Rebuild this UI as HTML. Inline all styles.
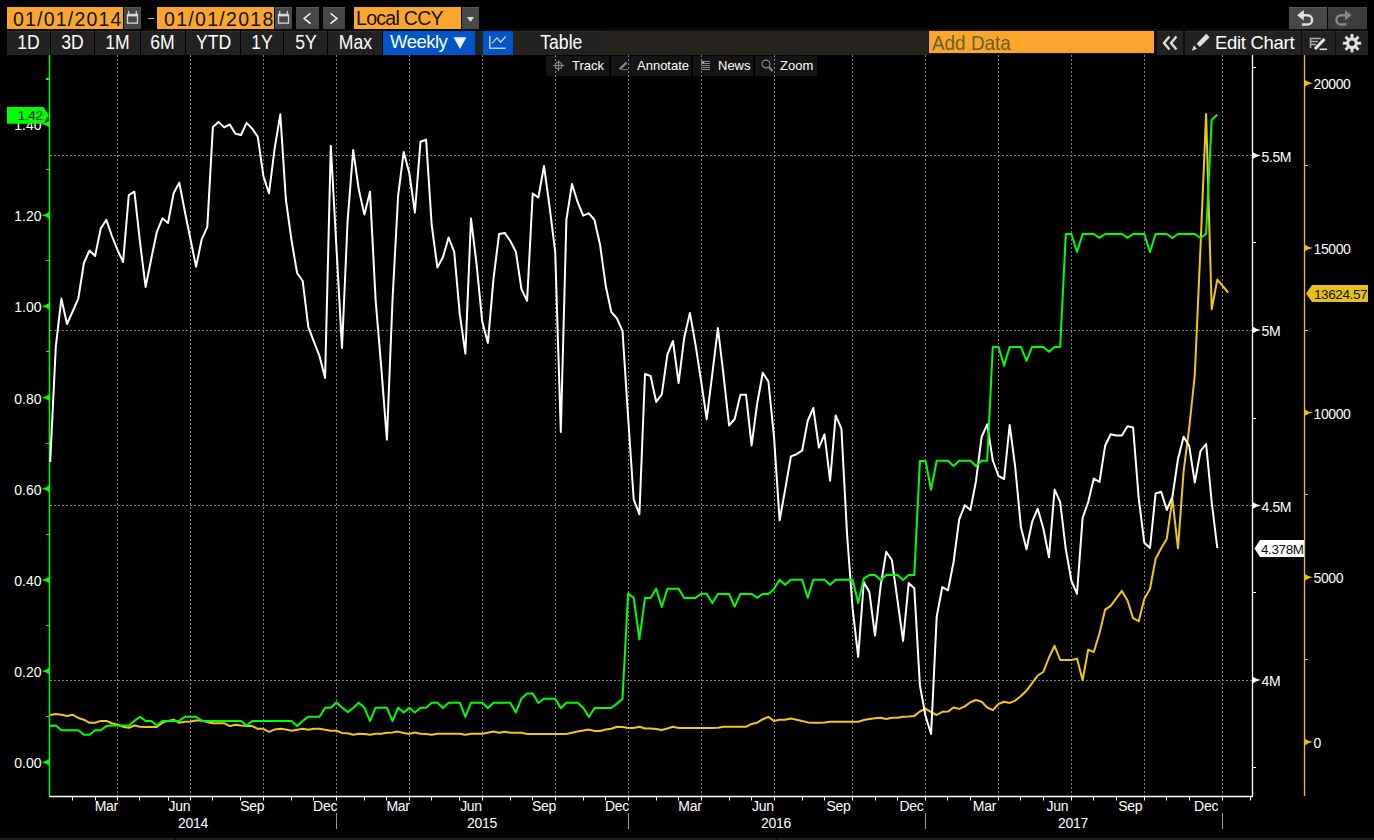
<!DOCTYPE html>
<html><head><meta charset="utf-8">
<style>
html,body{margin:0;padding:0;background:#000;width:1374px;height:840px;overflow:hidden;position:relative;font-family:"Liberation Sans",sans-serif;}
.a{position:absolute;box-sizing:border-box;}
.or{background:#faa62c;color:#111;}
.b1{background:#474747;border-top:1px solid #585858;}
.b2{background:#222222;border-top:1px solid #2e2e2e;color:#fff;text-align:center;}
.t1{font-size:19.5px;line-height:22px;white-space:nowrap;}
.t2{font-size:18.5px;line-height:21px;white-space:nowrap;}
.sx{display:inline-block;font-size:19.5px;transform:scaleX(0.9);transform-origin:50% 50%;}
.sxl{display:inline-block;transform:scaleX(0.9);transform-origin:0 50%;}
.tb{background:#141414;color:#fff;font-size:13px;line-height:20px;white-space:nowrap;}
svg{position:absolute;left:0;top:0;}
.g{stroke:#7e7e7e;stroke-width:1;stroke-dasharray:2 2;}
.ml{font-size:14px;fill:#fff;text-anchor:middle;letter-spacing:-0.3px;}
.al{font-size:14px;fill:#fff;}
.vl{font-size:13.5px;fill:#111;letter-spacing:-0.4px;}
</style></head><body>
<!-- row 1 -->
<div class="a or t1" style="left:7px;top:7px;width:116px;height:22px;padding-left:6px;letter-spacing:1.2px;line-height:24px;">01/01/2014</div>
<div class="a b1" style="left:124px;top:7px;width:17px;height:22px;"><svg width="17" height="22" style="position:absolute;left:0;top:0"><rect x="3.5" y="6.5" width="10" height="8.6" fill="none" stroke="#d8d8d8" stroke-width="1.3"/><rect x="3" y="6" width="11" height="2.4" fill="#d8d8d8"/><line x1="4.7" y1="3" x2="4.7" y2="6.5" stroke="#d8d8d8" stroke-width="1.2"/><line x1="12.3" y1="3" x2="12.3" y2="6.5" stroke="#d8d8d8" stroke-width="1.2"/></svg></div>
<div class="a" style="left:148px;top:17.5px;width:6px;height:1.5px;background:#faa62c;"></div>
<div class="a or t1" style="left:157px;top:7px;width:117px;height:22px;padding-left:6px;letter-spacing:1.3px;line-height:24px;padding-left:7px;">01/01/2018</div>
<div class="a b1" style="left:275px;top:7px;width:17px;height:22px;"><svg width="17" height="22" style="position:absolute;left:0;top:0"><rect x="3.5" y="6.5" width="10" height="8.6" fill="none" stroke="#d8d8d8" stroke-width="1.3"/><rect x="3" y="6" width="11" height="2.4" fill="#d8d8d8"/><line x1="4.7" y1="3" x2="4.7" y2="6.5" stroke="#d8d8d8" stroke-width="1.2"/><line x1="12.3" y1="3" x2="12.3" y2="6.5" stroke="#d8d8d8" stroke-width="1.2"/></svg></div>
<div class="a b1" style="left:296px;top:7px;width:23px;height:22px;"><svg width="23" height="22" style="position:absolute;left:0;top:0"><polyline points="14.5,5.2 8,10.4 14.5,15.6" fill="none" stroke="#fff" stroke-width="1.4"/></svg></div>
<div class="a b1" style="left:323px;top:7px;width:22px;height:22px;"><svg width="22" height="22" style="position:absolute;left:0;top:0"><polyline points="7.5,5.2 14,10.4 7.5,15.6" fill="none" stroke="#fff" stroke-width="1.4"/></svg></div>
<div class="a or t1" style="left:354px;top:7px;width:107px;height:22px;padding-left:2px;letter-spacing:-0.7px;">Local CCY</div>
<div class="a b1" style="left:462px;top:7px;width:17px;height:22px;"><svg width="17" height="22" style="position:absolute;left:0;top:0"><polygon points="5,9 12,9 8.5,14" fill="#ddd"/></svg></div>
<div class="a b1" style="left:1289px;top:7px;width:38px;height:22px;"><svg width="38" height="22" style="position:absolute;left:0;top:-1px"><path d="M14 8.3 H18.5 A4.6,4.6 0 0 1 18.5,17.5 H13" fill="none" stroke="#e0e0e0" stroke-width="2.4"/><polygon points="8,8.3 14.8,3 14.8,13.6" fill="#e0e0e0"/></svg></div>
<div class="a" style="left:1328px;top:7px;width:39px;height:22px;background:#3c3c3c;border-top:1px solid #444;"><svg width="39" height="22" style="position:absolute;left:0;top:-1px"><path d="M17.5 8.3 H13 A4.6,4.6 0 0 0 13,17.5 H18.5" fill="none" stroke="#888" stroke-width="2.4"/><polygon points="23.5,8.3 17,3 17,13.6" fill="#888"/></svg></div>
<!-- row 2 -->
<div class="a" style="left:7px;top:29px;width:1361px;height:2px;background:#0e0c0a;"></div>
<div class="a" style="left:475px;top:31px;width:453px;height:24px;background:#26231e;"></div>
<div class="a" style="left:1154px;top:31px;width:214px;height:24px;background:#0c0c0c;"></div>
<div class="a b2 t2" style="left:7px;top:31px;width:43px;height:24px;"><span class="sx">1D</span></div>
<div class="a b2 t2" style="left:51px;top:31px;width:43px;height:24px;"><span class="sx">3D</span></div>
<div class="a b2 t2" style="left:95px;top:31px;width:45px;height:24px;"><span class="sx">1M</span></div>
<div class="a b2 t2" style="left:141px;top:31px;width:44px;height:24px;"><span class="sx">6M</span></div>
<div class="a b2 t2" style="left:186px;top:31px;width:54px;height:24px;"><span class="sx">YTD</span></div>
<div class="a b2 t2" style="left:241px;top:31px;width:42px;height:24px;"><span class="sx">1Y</span></div>
<div class="a b2 t2" style="left:284px;top:31px;width:43px;height:24px;"><span class="sx">5Y</span></div>
<div class="a b2 t2" style="left:328px;top:31px;width:54px;height:24px;"><span class="sx">Max</span></div>
<div class="a t2" style="left:383px;top:31px;width:92px;height:24px;background:#0055c8;color:#fff;padding-left:7px;letter-spacing:-0.5px;">Weekly<svg width="16" height="24" style="position:absolute;left:70px;top:0"><polygon points="0.5,6.2 13.5,6.2 7,18" fill="#f0f0f0"/></svg></div>
<div class="a" style="left:483px;top:31px;width:30px;height:24px;background:#0055c8;"><svg width="30" height="24" style="position:absolute;left:0;top:0"><polyline points="6.8,4.9 6.8,17.3 22.8,17.3" fill="none" stroke="#c4cede" stroke-width="1.5"/><polyline points="9,12.4 14,6.8 17.6,11.1 22.8,5.5" fill="none" stroke="#c4cede" stroke-width="1.4"/></svg></div>
<div class="a b2 t2" style="left:520px;top:31px;width:82px;height:24px;"><span class="sx">Table</span></div>
<div class="a or t2" style="left:928px;top:30px;width:227px;height:24px;color:#6a5e2a;padding-left:3px;border:1px solid #1c1408;line-height:24px;"><span class="sxl" style="font-size:21px;">Add Data</span></div>
<div class="a b2" style="left:1157px;top:31px;width:26px;height:24px;"><svg width="26" height="24" style="position:absolute;left:0;top:-1px"><polyline points="12.5,5.5 7,12 12.5,18.5" fill="none" stroke="#ddd" stroke-width="2.4"/><polyline points="19.5,5.5 14,12 19.5,18.5" fill="none" stroke="#ddd" stroke-width="2.4"/></svg></div>
<div class="a b2 t2" style="left:1185px;top:31px;width:116px;height:24px;text-align:left;padding-left:30px;letter-spacing:-0.3px;">Edit Chart<svg width="28" height="24" style="position:absolute;left:0;top:-2px"><polygon points="11.6,13.7 21.2,3.8 24.7,7.3 14.8,16.9" fill="#ddd"/><polygon points="6.9,20.7 8.9,15.6 12,18.7" fill="#ddd"/></svg></div>
<div class="a b2" style="left:1302px;top:31px;width:33px;height:24px;"><svg width="33" height="24" style="position:absolute;left:0;top:-1px"><g stroke="#aaa" stroke-width="1.5" fill="none"><polyline points="19,7.5 8.5,7.5 8.5,17"/><line x1="8.5" y1="10.5" x2="16" y2="10.5"/><line x1="8.5" y1="13.5" x2="14" y2="13.5"/></g><line x1="13" y1="18" x2="22.5" y2="8" stroke="#e8e8e8" stroke-width="3"/><line x1="17.5" y1="18.3" x2="25" y2="18.3" stroke="#e0e0e0" stroke-width="1.6"/></svg></div>
<div class="a b2" style="left:1336px;top:31px;width:32px;height:24px;"><svg width="32" height="24" style="position:absolute;left:0;top:-1px"><g fill="#e0e0e0"><circle cx="16" cy="12.2" r="6"/><rect x="14.6" y="3" width="2.8" height="18.4"/><rect x="6.8" y="10.8" width="18.4" height="2.8"/><rect x="14.6" y="3" width="2.8" height="18.4" transform="rotate(45 16 12.2)"/><rect x="14.6" y="3" width="2.8" height="18.4" transform="rotate(-45 16 12.2)"/></g><circle cx="16" cy="12.2" r="2.7" fill="#222"/></svg></div>
<!-- track bar -->
<div class="a tb" style="left:546px;top:56px;width:63px;height:20px;padding-left:26px;">Track<svg width="20" height="20" style="position:absolute;left:0;top:0"><circle cx="12.6" cy="9.5" r="3.2" fill="none" stroke="#8a8a8a" stroke-width="1.1"/><line x1="7" y1="9.5" x2="18.2" y2="9.5" stroke="#8a8a8a" stroke-width="1.1"/><line x1="12.6" y1="4" x2="12.6" y2="15" stroke="#8a8a8a" stroke-width="1.1"/></svg></div>
<div class="a tb" style="left:611px;top:56px;width:80px;height:20px;padding-left:26px;">Annotate<svg width="22" height="20" style="position:absolute;left:0;top:0"><line x1="8.7" y1="13.1" x2="15.6" y2="6.6" stroke="#8a8a8a" stroke-width="2.2"/><line x1="10.5" y1="13.6" x2="17" y2="13.6" stroke="#777" stroke-width="1"/></svg></div>
<div class="a tb" style="left:693px;top:56px;width:60px;height:20px;padding-left:25px;">News<svg width="20" height="20" style="position:absolute;left:0;top:0"><g stroke="#8a8a8a" stroke-width="1"><line x1="8.3" y1="5.5" x2="17" y2="5.5"/><line x1="8.3" y1="7.5" x2="17" y2="7.5"/><line x1="8.3" y1="9.5" x2="17" y2="9.5"/><line x1="8.3" y1="11.5" x2="17" y2="11.5"/><line x1="8.3" y1="13.5" x2="17" y2="13.5"/></g><rect x="8.3" y="5" width="3" height="3" fill="#999"/></svg></div>
<div class="a tb" style="left:755px;top:56px;width:62px;height:20px;padding-left:25px;">Zoom<svg width="22" height="20" style="position:absolute;left:0;top:0"><circle cx="11" cy="8" r="3.9" fill="none" stroke="#8a8a8a" stroke-width="1.2"/><line x1="14" y1="11.3" x2="17.6" y2="15" stroke="#8a8a8a" stroke-width="2"/></svg></div>
<svg width="1374" height="840" style="pointer-events:none">
<line x1="117.5" y1="55" x2="117.5" y2="796" class="g"/>
<line x1="190.5" y1="55" x2="190.5" y2="796" class="g"/>
<line x1="263.5" y1="55" x2="263.5" y2="796" class="g"/>
<line x1="336.5" y1="55" x2="336.5" y2="796" class="g"/>
<line x1="409.5" y1="55" x2="409.5" y2="796" class="g"/>
<line x1="482.5" y1="55" x2="482.5" y2="796" class="g"/>
<line x1="555.5" y1="55" x2="555.5" y2="796" class="g"/>
<line x1="628.5" y1="55" x2="628.5" y2="796" class="g"/>
<line x1="701.5" y1="55" x2="701.5" y2="796" class="g"/>
<line x1="774.5" y1="55" x2="774.5" y2="796" class="g"/>
<line x1="852.5" y1="55" x2="852.5" y2="796" class="g"/>
<line x1="925.5" y1="55" x2="925.5" y2="796" class="g"/>
<line x1="998.5" y1="55" x2="998.5" y2="796" class="g"/>
<line x1="1071.5" y1="55" x2="1071.5" y2="796" class="g"/>
<line x1="1144.5" y1="55" x2="1144.5" y2="796" class="g"/>
<line x1="1222.5" y1="55" x2="1222.5" y2="796" class="g"/>
<line x1="50" y1="155.5" x2="1252" y2="155.5" class="g"/>
<line x1="50" y1="330.5" x2="1252" y2="330.5" class="g"/>
<line x1="50" y1="505.5" x2="1252" y2="505.5" class="g"/>
<line x1="50" y1="680.5" x2="1252" y2="680.5" class="g"/>
<line x1="49" y1="796.5" x2="1253" y2="796.5" stroke="#fff" stroke-width="1.3"/>
<line x1="72.5" y1="796" x2="72.5" y2="800.5" stroke="#fff" stroke-width="1"/>
<line x1="95.5" y1="796" x2="95.5" y2="800.5" stroke="#fff" stroke-width="1"/>
<line x1="117.5" y1="796" x2="117.5" y2="800.5" stroke="#fff" stroke-width="1"/>
<line x1="139.5" y1="796" x2="139.5" y2="800.5" stroke="#fff" stroke-width="1"/>
<line x1="168.5" y1="796" x2="168.5" y2="800.5" stroke="#fff" stroke-width="1"/>
<line x1="190.5" y1="796" x2="190.5" y2="800.5" stroke="#fff" stroke-width="1"/>
<line x1="212.5" y1="796" x2="212.5" y2="800.5" stroke="#fff" stroke-width="1"/>
<line x1="240.5" y1="796" x2="240.5" y2="800.5" stroke="#fff" stroke-width="1"/>
<line x1="263.5" y1="796" x2="263.5" y2="800.5" stroke="#fff" stroke-width="1"/>
<line x1="291.5" y1="796" x2="291.5" y2="800.5" stroke="#fff" stroke-width="1"/>
<line x1="313.5" y1="796" x2="313.5" y2="800.5" stroke="#fff" stroke-width="1"/>
<line x1="336.5" y1="796" x2="336.5" y2="800.5" stroke="#fff" stroke-width="1"/>
<line x1="364.5" y1="796" x2="364.5" y2="800.5" stroke="#fff" stroke-width="1"/>
<line x1="386.5" y1="796" x2="386.5" y2="800.5" stroke="#fff" stroke-width="1"/>
<line x1="409.5" y1="796" x2="409.5" y2="800.5" stroke="#fff" stroke-width="1"/>
<line x1="431.5" y1="796" x2="431.5" y2="800.5" stroke="#fff" stroke-width="1"/>
<line x1="459.5" y1="796" x2="459.5" y2="800.5" stroke="#fff" stroke-width="1"/>
<line x1="482.5" y1="796" x2="482.5" y2="800.5" stroke="#fff" stroke-width="1"/>
<line x1="510.5" y1="796" x2="510.5" y2="800.5" stroke="#fff" stroke-width="1"/>
<line x1="532.5" y1="796" x2="532.5" y2="800.5" stroke="#fff" stroke-width="1"/>
<line x1="555.5" y1="796" x2="555.5" y2="800.5" stroke="#fff" stroke-width="1"/>
<line x1="583.5" y1="796" x2="583.5" y2="800.5" stroke="#fff" stroke-width="1"/>
<line x1="605.5" y1="796" x2="605.5" y2="800.5" stroke="#fff" stroke-width="1"/>
<line x1="628.5" y1="796" x2="628.5" y2="800.5" stroke="#fff" stroke-width="1"/>
<line x1="656.5" y1="796" x2="656.5" y2="800.5" stroke="#fff" stroke-width="1"/>
<line x1="678.5" y1="796" x2="678.5" y2="800.5" stroke="#fff" stroke-width="1"/>
<line x1="701.5" y1="796" x2="701.5" y2="800.5" stroke="#fff" stroke-width="1"/>
<line x1="729.5" y1="796" x2="729.5" y2="800.5" stroke="#fff" stroke-width="1"/>
<line x1="751.5" y1="796" x2="751.5" y2="800.5" stroke="#fff" stroke-width="1"/>
<line x1="774.5" y1="796" x2="774.5" y2="800.5" stroke="#fff" stroke-width="1"/>
<line x1="802.5" y1="796" x2="802.5" y2="800.5" stroke="#fff" stroke-width="1"/>
<line x1="824.5" y1="796" x2="824.5" y2="800.5" stroke="#fff" stroke-width="1"/>
<line x1="852.5" y1="796" x2="852.5" y2="800.5" stroke="#fff" stroke-width="1"/>
<line x1="875.5" y1="796" x2="875.5" y2="800.5" stroke="#fff" stroke-width="1"/>
<line x1="897.5" y1="796" x2="897.5" y2="800.5" stroke="#fff" stroke-width="1"/>
<line x1="925.5" y1="796" x2="925.5" y2="800.5" stroke="#fff" stroke-width="1"/>
<line x1="947.5" y1="796" x2="947.5" y2="800.5" stroke="#fff" stroke-width="1"/>
<line x1="970.5" y1="796" x2="970.5" y2="800.5" stroke="#fff" stroke-width="1"/>
<line x1="998.5" y1="796" x2="998.5" y2="800.5" stroke="#fff" stroke-width="1"/>
<line x1="1020.5" y1="796" x2="1020.5" y2="800.5" stroke="#fff" stroke-width="1"/>
<line x1="1043.5" y1="796" x2="1043.5" y2="800.5" stroke="#fff" stroke-width="1"/>
<line x1="1071.5" y1="796" x2="1071.5" y2="800.5" stroke="#fff" stroke-width="1"/>
<line x1="1093.5" y1="796" x2="1093.5" y2="800.5" stroke="#fff" stroke-width="1"/>
<line x1="1116.5" y1="796" x2="1116.5" y2="800.5" stroke="#fff" stroke-width="1"/>
<line x1="1144.5" y1="796" x2="1144.5" y2="800.5" stroke="#fff" stroke-width="1"/>
<line x1="1166.5" y1="796" x2="1166.5" y2="800.5" stroke="#fff" stroke-width="1"/>
<line x1="1189.5" y1="796" x2="1189.5" y2="800.5" stroke="#fff" stroke-width="1"/>
<line x1="1222.5" y1="796" x2="1222.5" y2="800.5" stroke="#fff" stroke-width="1"/>
<line x1="1250.5" y1="796" x2="1250.5" y2="800.5" stroke="#fff" stroke-width="1"/>
<text x="106.3" y="811" class="ml">Mar</text>
<text x="179.3" y="811" class="ml">Jun</text>
<text x="252.2" y="811" class="ml">Sep</text>
<text x="325.1" y="811" class="ml">Dec</text>
<text x="398.1" y="811" class="ml">Mar</text>
<text x="471.0" y="811" class="ml">Jun</text>
<text x="544.0" y="811" class="ml">Sep</text>
<text x="616.9" y="811" class="ml">Dec</text>
<text x="689.9" y="811" class="ml">Mar</text>
<text x="762.8" y="811" class="ml">Jun</text>
<text x="838.5" y="811" class="ml">Sep</text>
<text x="911.5" y="811" class="ml">Dec</text>
<text x="984.4" y="811" class="ml">Mar</text>
<text x="1057.4" y="811" class="ml">Jun</text>
<text x="1130.3" y="811" class="ml">Sep</text>
<text x="1206.1" y="811" class="ml">Dec</text>
<text x="193.0" y="827.5" class="ml">2014</text>
<text x="482.0" y="827.5" class="ml">2015</text>
<text x="776.0" y="827.5" class="ml">2016</text>
<text x="1073.0" y="827.5" class="ml">2017</text>
<line x1="336.5" y1="813" x2="336.5" y2="829" stroke="#9a9a9a" stroke-width="1"/>
<line x1="628.5" y1="813" x2="628.5" y2="829" stroke="#9a9a9a" stroke-width="1"/>
<line x1="925.5" y1="813" x2="925.5" y2="829" stroke="#9a9a9a" stroke-width="1"/>
<line x1="1222.5" y1="813" x2="1222.5" y2="829" stroke="#9a9a9a" stroke-width="1"/>
<line x1="49.5" y1="55" x2="49.5" y2="796" stroke="#00ff00" stroke-width="1.5"/>
<path d="M41.5,762.3 Q46,761.3 49,759.1 V765.5 Q46,763.3 41.5,762.3 Z" fill="#00ff00"/>
<text x="41.5" y="768.3" class="al" text-anchor="end">0.00</text>
<line x1="46" y1="716.5" x2="49" y2="716.5" stroke="#00ff00" stroke-width="1"/>
<path d="M41.5,671.1 Q46,670.1 49,667.9 V674.3 Q46,672.1 41.5,671.1 Z" fill="#00ff00"/>
<text x="41.5" y="677.1" class="al" text-anchor="end">0.20</text>
<line x1="46" y1="625.5" x2="49" y2="625.5" stroke="#00ff00" stroke-width="1"/>
<path d="M41.5,579.9 Q46,578.9 49,576.7 V583.1 Q46,580.9 41.5,579.9 Z" fill="#00ff00"/>
<text x="41.5" y="585.9" class="al" text-anchor="end">0.40</text>
<line x1="46" y1="534.5" x2="49" y2="534.5" stroke="#00ff00" stroke-width="1"/>
<path d="M41.5,488.7 Q46,487.7 49,485.5 V491.9 Q46,489.7 41.5,488.7 Z" fill="#00ff00"/>
<text x="41.5" y="494.7" class="al" text-anchor="end">0.60</text>
<line x1="46" y1="443.5" x2="49" y2="443.5" stroke="#00ff00" stroke-width="1"/>
<path d="M41.5,397.5 Q46,396.5 49,394.3 V400.7 Q46,398.5 41.5,397.5 Z" fill="#00ff00"/>
<text x="41.5" y="403.5" class="al" text-anchor="end">0.80</text>
<line x1="46" y1="351.5" x2="49" y2="351.5" stroke="#00ff00" stroke-width="1"/>
<path d="M41.5,306.3 Q46,305.3 49,303.1 V309.5 Q46,307.3 41.5,306.3 Z" fill="#00ff00"/>
<text x="41.5" y="312.3" class="al" text-anchor="end">1.00</text>
<line x1="46" y1="260.5" x2="49" y2="260.5" stroke="#00ff00" stroke-width="1"/>
<path d="M41.5,215.2 Q46,214.2 49,212.0 V218.4 Q46,216.2 41.5,215.2 Z" fill="#00ff00"/>
<text x="41.5" y="221.2" class="al" text-anchor="end">1.20</text>
<line x1="46" y1="169.5" x2="49" y2="169.5" stroke="#00ff00" stroke-width="1"/>
<path d="M41.5,124.0 Q46,123.0 49,120.8 V127.2 Q46,125.0 41.5,124.0 Z" fill="#00ff00"/>
<text x="41.5" y="130.0" class="al" text-anchor="end">1.40</text>
<line x1="46" y1="78.5" x2="49" y2="78.5" stroke="#00ff00" stroke-width="1"/>
<line x1="46" y1="79.5" x2="49" y2="79.5" stroke="#00ff00" stroke-width="1"/>
<line x1="1252.5" y1="55" x2="1252.5" y2="796" stroke="#fff" stroke-width="1.3"/>
<path d="M1261,155.5 Q1256,154.5 1253,152.3 V158.7 Q1256,156.5 1261,155.5 Z" fill="#fff"/>
<text x="1261.5" y="161.5" class="al" letter-spacing="-0.4">5.5M</text>
<path d="M1261,330.0 Q1256,329.0 1253,326.8 V333.2 Q1256,331.0 1261,330.0 Z" fill="#fff"/>
<text x="1261.5" y="336.0" class="al" letter-spacing="-0.4">5M</text>
<path d="M1261,505.5 Q1256,504.5 1253,502.3 V508.7 Q1256,506.5 1261,505.5 Z" fill="#fff"/>
<text x="1261.5" y="511.5" class="al" letter-spacing="-0.4">4.5M</text>
<path d="M1261,680.0 Q1256,679.0 1253,676.8 V683.2 Q1256,681.0 1261,680.0 Z" fill="#fff"/>
<text x="1261.5" y="686.0" class="al" letter-spacing="-0.4">4M</text>
<line x1="1253" y1="67.5" x2="1256" y2="67.5" stroke="#fff" stroke-width="1"/>
<line x1="1253" y1="242.5" x2="1256" y2="242.5" stroke="#fff" stroke-width="1"/>
<line x1="1253" y1="418.5" x2="1256" y2="418.5" stroke="#fff" stroke-width="1"/>
<line x1="1253" y1="592.5" x2="1256" y2="592.5" stroke="#fff" stroke-width="1"/>
<line x1="1253" y1="767.5" x2="1256" y2="767.5" stroke="#fff" stroke-width="1"/>
<line x1="1304.5" y1="55" x2="1304.5" y2="796" stroke="#e6c40c" stroke-width="1.3"/>
<path d="M1313,742.0 Q1308,741.0 1305,738.8 V745.2 Q1308,743.0 1313,742.0 Z" fill="#e6c40c"/>
<text x="1313.5" y="748.0" class="al" letter-spacing="-0.4">0</text>
<line x1="1305" y1="659.5" x2="1308" y2="659.5" stroke="#e6c40c" stroke-width="1"/>
<path d="M1313,577.3 Q1308,576.3 1305,574.1 V580.5 Q1308,578.3 1313,577.3 Z" fill="#e6c40c"/>
<text x="1313.5" y="583.3" class="al" letter-spacing="-0.4">5000</text>
<line x1="1305" y1="494.5" x2="1308" y2="494.5" stroke="#e6c40c" stroke-width="1"/>
<path d="M1313,412.6 Q1308,411.6 1305,409.4 V415.8 Q1308,413.6 1313,412.6 Z" fill="#e6c40c"/>
<text x="1313.5" y="418.6" class="al" letter-spacing="-0.4">10000</text>
<line x1="1305" y1="330.5" x2="1308" y2="330.5" stroke="#e6c40c" stroke-width="1"/>
<path d="M1313,247.9 Q1308,246.9 1305,244.7 V251.1 Q1308,248.9 1313,247.9 Z" fill="#e6c40c"/>
<text x="1313.5" y="253.9" class="al" letter-spacing="-0.4">15000</text>
<line x1="1305" y1="165.5" x2="1308" y2="165.5" stroke="#e6c40c" stroke-width="1"/>
<path d="M1313,83.2 Q1308,82.2 1305,80.0 V86.4 Q1308,84.2 1313,83.2 Z" fill="#e6c40c"/>
<text x="1313.5" y="89.2" class="al" letter-spacing="-0.4">20000</text>
<polyline points="50.2,715.0 55.8,713.9 61.4,714.7 67.0,715.9 72.6,714.7 78.3,718.0 83.9,719.7 89.5,722.8 95.1,722.8 100.7,720.9 106.3,720.9 111.9,723.2 117.5,724.7 123.1,726.7 128.8,727.8 134.4,725.5 140.0,726.7 145.6,727.0 151.2,727.0 156.8,727.0 162.4,722.6 168.0,720.9 173.6,719.7 179.3,722.8 184.9,721.7 190.5,721.4 196.1,720.5 201.7,720.5 207.3,722.0 212.9,723.2 218.5,723.2 224.1,723.2 229.8,726.1 235.4,724.7 241.0,725.5 246.6,726.1 252.2,726.1 257.8,728.8 263.4,728.8 269.0,731.9 274.6,729.6 280.3,728.7 285.9,729.6 291.5,730.8 297.1,729.8 302.7,728.7 308.3,729.8 313.9,728.7 319.5,728.7 325.1,729.8 330.8,730.8 336.4,730.8 342.0,732.9 347.6,733.3 353.2,734.8 358.8,733.7 364.4,733.9 370.0,734.8 375.6,733.7 381.2,733.7 386.9,732.7 392.5,732.5 398.1,731.6 403.7,733.0 409.3,733.9 414.9,732.5 420.5,733.7 426.1,733.9 431.7,734.8 437.4,733.7 443.0,733.7 448.6,733.7 454.2,733.7 459.8,733.7 465.4,734.8 471.0,733.7 476.6,733.7 482.2,733.7 487.9,732.7 493.5,731.6 499.1,732.7 504.7,731.8 510.3,732.7 515.9,732.7 521.5,732.7 527.1,733.9 532.7,733.9 538.4,733.9 544.0,733.9 549.6,733.9 555.2,733.9 560.8,733.9 566.4,733.9 572.0,732.7 577.6,731.6 583.2,730.6 588.9,729.6 594.5,731.0 600.1,731.0 605.7,729.5 611.3,728.7 616.9,726.7 622.5,726.9 628.1,727.9 633.7,727.9 639.4,726.7 645.0,728.5 650.6,728.5 656.2,728.9 661.8,730.0 667.4,728.5 673.0,726.8 678.6,728.0 684.2,728.0 689.9,728.0 695.5,728.0 701.1,728.0 706.7,728.0 712.3,728.0 717.9,727.7 723.5,726.8 729.1,726.8 734.7,726.8 740.4,726.8 746.0,726.8 751.6,723.9 757.2,722.7 762.8,719.2 768.4,716.9 774.0,721.0 779.6,719.8 785.2,719.8 790.9,718.6 796.5,719.7 802.1,720.9 807.7,722.4 813.3,722.8 818.9,722.8 824.5,722.6 830.1,721.7 835.7,721.7 841.4,721.7 847.0,721.7 852.6,721.7 858.2,721.7 863.8,720.0 869.4,719.1 875.0,718.2 880.6,717.7 886.2,718.9 891.9,717.7 897.5,717.7 903.1,716.8 908.7,716.6 914.3,715.9 919.9,711.5 925.5,708.6 931.1,712.1 936.7,715.0 942.3,711.8 948.0,711.6 953.6,707.5 959.2,708.9 964.8,706.4 970.4,702.3 976.0,700.0 981.6,701.7 987.2,707.5 992.8,710.1 998.5,704.0 1004.1,701.7 1009.7,702.9 1015.3,700.6 1020.9,695.9 1026.5,690.7 1032.1,683.1 1037.7,675.5 1043.3,672.0 1049.0,657.5 1054.6,645.8 1060.2,660.0 1065.8,660.0 1071.4,660.0 1077.0,658.6 1082.6,680.2 1088.2,649.8 1093.8,652.0 1099.5,633.2 1105.1,609.7 1110.7,605.9 1116.3,598.4 1121.9,590.9 1127.5,600.5 1133.1,618.2 1138.7,621.2 1144.3,598.9 1150.0,589.0 1155.6,558.8 1161.2,548.3 1166.8,538.7 1172.4,499.0 1178.0,548.3 1183.6,471.4 1189.2,428.0 1194.8,375.0 1200.5,247.0 1206.1,114.0 1211.7,309.3 1217.3,279.6 1228.2,292.5" fill="none" stroke="#eec814" stroke-width="2" stroke-linejoin="round"/>
<polyline points="50.2,462.0 55.8,346.7 61.4,298.6 67.0,324.0 72.6,311.5 78.3,298.6 83.9,263.0 89.5,250.5 95.1,256.0 100.7,228.6 106.3,219.8 111.9,236.0 117.5,250.0 123.1,262.0 128.8,195.2 134.4,191.7 140.0,242.0 145.6,287.0 151.2,259.0 156.8,232.1 162.4,218.3 168.0,223.1 173.6,193.3 179.3,182.6 184.9,211.7 190.5,239.5 196.1,266.7 201.7,239.3 207.3,226.9 212.9,126.9 218.5,121.9 224.1,127.4 229.8,124.5 235.4,133.8 241.0,135.0 246.6,122.9 252.2,128.6 257.8,136.9 263.4,176.2 269.0,193.3 274.6,148.8 280.3,114.3 285.9,200.0 291.5,240.0 297.1,273.0 302.7,281.0 308.3,327.0 313.9,341.7 319.5,356.0 325.1,378.0 330.8,145.8 336.4,246.7 342.0,348.0 347.6,220.8 353.2,150.0 358.8,189.6 364.4,214.6 370.0,191.7 375.6,300.0 381.2,366.7 386.9,439.6 392.5,300.0 398.1,195.8 403.7,152.0 409.3,173.0 414.9,212.5 420.5,141.7 426.1,139.6 431.7,225.0 437.4,267.5 443.0,257.0 448.6,237.5 454.2,251.8 459.8,314.3 465.4,353.6 471.0,218.6 476.6,264.3 482.2,321.4 487.9,342.9 493.5,278.6 499.1,233.9 504.7,232.9 510.3,241.0 515.9,251.8 521.5,289.3 527.1,300.7 532.7,193.6 538.4,197.5 544.0,166.0 549.6,207.0 555.2,251.8 560.8,432.0 566.4,219.6 572.0,184.0 577.6,202.0 583.2,215.6 588.9,213.3 594.5,220.0 600.1,245.0 605.7,285.7 611.3,312.0 616.9,318.3 622.5,331.0 628.1,417.0 633.7,499.3 639.4,514.3 645.0,374.0 650.6,376.0 656.2,402.0 661.8,394.3 667.4,354.5 673.0,341.0 678.6,383.0 684.2,337.8 689.9,312.9 695.5,344.6 701.1,380.8 706.7,419.2 712.3,374.0 717.9,328.0 723.5,374.9 729.1,425.5 734.7,419.0 740.4,394.7 746.0,394.7 751.6,445.4 757.2,403.5 762.8,372.7 768.4,381.5 774.0,436.6 779.6,520.3 785.2,489.4 790.9,456.4 796.5,454.2 802.1,450.7 807.7,421.0 813.3,408.0 818.9,447.6 824.5,434.4 830.1,480.6 835.7,415.4 841.4,428.6 847.0,533.5 852.6,608.4 858.2,656.8 863.8,582.0 869.4,592.3 875.0,635.6 880.6,586.2 886.2,551.8 891.9,560.0 897.5,600.4 903.1,640.9 908.7,583.0 914.3,588.3 919.9,685.4 925.5,715.8 931.1,734.0 936.7,616.6 942.3,587.0 948.0,590.3 953.6,562.0 959.2,519.4 964.8,505.3 970.4,510.0 976.0,481.0 981.6,437.0 987.2,424.3 992.8,460.5 998.5,476.0 1004.1,479.0 1009.7,424.9 1015.3,468.0 1020.9,527.0 1026.5,549.3 1032.1,521.8 1037.7,508.7 1043.3,528.3 1049.0,557.2 1054.6,489.6 1060.2,502.1 1065.8,549.3 1071.4,580.7 1077.0,593.8 1082.6,517.9 1088.2,502.1 1093.8,478.6 1099.5,482.0 1105.1,445.8 1110.7,434.3 1116.3,435.4 1121.9,435.4 1127.5,426.2 1133.1,427.5 1138.7,498.2 1144.3,542.7 1150.0,548.0 1155.6,493.5 1161.2,491.7 1166.8,510.0 1172.4,497.0 1178.0,459.0 1183.6,436.7 1189.2,445.8 1194.8,482.5 1200.5,451.0 1206.1,444.0 1211.7,502.1 1217.3,548.0" fill="none" stroke="#ffffff" stroke-width="2" stroke-linejoin="round"/>
<polyline points="50.2,726.1 55.8,725.5 61.4,730.2 67.0,730.2 72.6,730.2 78.3,730.2 83.9,734.8 89.5,734.8 95.1,730.2 100.7,730.2 106.3,726.1 111.9,725.5 117.5,725.5 123.1,725.5 128.8,725.5 134.4,720.9 140.0,716.8 145.6,720.9 151.2,720.9 156.8,725.5 162.4,720.9 168.0,720.9 173.6,720.9 179.3,720.9 184.9,716.8 190.5,716.8 196.1,716.8 201.7,720.9 207.3,720.9 212.9,720.9 218.5,720.9 224.1,720.9 229.8,720.9 235.4,720.9 241.0,720.9 246.6,725.5 252.2,720.9 257.8,720.9 263.4,720.9 269.0,720.9 274.6,720.9 280.3,720.9 285.9,720.9 291.5,720.9 297.1,726.1 302.7,720.9 308.3,716.8 313.9,716.8 319.5,716.8 325.1,707.7 330.8,707.7 336.4,702.6 342.0,707.4 347.6,712.1 353.2,708.0 358.8,702.7 364.4,707.7 370.0,721.1 375.6,707.7 381.2,707.7 386.9,707.7 392.5,721.1 398.1,707.7 403.7,712.4 409.3,707.7 414.9,712.4 420.5,707.7 426.1,707.7 431.7,702.7 437.4,702.7 443.0,708.0 448.6,702.7 454.2,702.7 459.8,702.7 465.4,717.0 471.0,702.7 476.6,702.7 482.2,702.7 487.9,708.0 493.5,702.7 499.1,702.7 504.7,702.7 510.3,702.7 515.9,712.4 521.5,698.4 527.1,693.4 532.7,693.4 538.4,703.0 544.0,698.7 549.6,698.7 555.2,698.7 560.8,708.3 566.4,702.7 572.0,702.7 577.6,702.7 583.2,707.7 588.9,717.0 594.5,708.0 600.1,708.0 605.7,708.0 611.3,708.0 616.9,703.6 622.5,699.0 628.1,593.5 633.7,597.9 639.4,639.4 645.0,597.9 650.6,597.9 656.2,588.7 661.8,607.0 667.4,588.7 673.0,588.7 678.6,588.7 684.2,597.9 689.9,597.9 695.5,597.9 701.1,593.8 706.7,593.8 712.3,603.1 717.9,594.0 723.5,593.9 729.1,593.9 734.7,606.5 740.4,593.9 746.0,593.9 751.6,593.9 757.2,597.8 762.8,593.9 768.4,593.9 774.0,589.0 779.6,579.7 785.2,584.7 790.9,579.7 796.5,579.7 802.1,579.7 807.7,597.8 813.3,579.7 818.9,579.7 824.5,579.7 830.1,584.7 835.7,579.7 841.4,579.7 847.0,579.7 852.6,579.6 858.2,602.9 863.8,578.6 869.4,575.0 875.0,575.0 880.6,580.0 886.2,575.0 891.9,575.0 897.5,575.0 903.1,580.0 908.7,575.0 914.3,575.0 919.9,461.0 925.5,460.7 931.1,489.7 936.7,460.7 942.3,460.7 948.0,460.7 953.6,466.0 959.2,460.7 964.8,460.7 970.4,460.7 976.0,466.0 981.6,460.7 987.2,460.7 992.8,346.9 998.5,346.9 1004.1,365.7 1009.7,346.9 1015.3,346.9 1020.9,346.9 1026.5,360.9 1032.1,346.9 1037.7,346.9 1043.3,346.9 1049.0,351.8 1054.6,346.9 1060.2,346.9 1065.8,234.0 1071.4,234.0 1077.0,252.0 1082.6,234.0 1088.2,234.0 1093.8,234.0 1099.5,237.8 1105.1,234.0 1110.7,234.0 1116.3,234.0 1121.9,234.0 1127.5,237.8 1133.1,234.0 1138.7,234.0 1144.3,234.0 1150.0,252.0 1155.6,234.0 1161.2,234.0 1166.8,234.0 1172.4,238.0 1178.0,234.0 1183.6,234.0 1189.2,234.0 1194.8,234.0 1200.5,238.0 1206.1,234.0 1211.7,119.7 1217.3,114.8" fill="none" stroke="#00ff00" stroke-width="2" stroke-linejoin="round"/>
<polygon points="7,107 43.5,107 49,115.4 43.5,123.8 7,123.8" fill="#00ff00"/>
<text x="42.5" y="120" class="vl" text-anchor="end">1.42</text>
<polygon points="1254.5,548.5 1260,540 1304,540 1304,557 1260,557" fill="#fff"/>
<text x="1261" y="553.5" class="vl">4.378M</text>
<polygon points="1306,293.5 1312,285 1368,285 1368,302 1312,302" fill="#e6c01a"/>
<text x="1314" y="298.5" class="vl">13624.57</text>
</svg>
<div class="a" style="left:0;top:838px;width:175px;height:2px;background:#1e1e1e;"></div><div class="a" style="left:176px;top:838px;width:600px;height:2px;background:#1e1e1e;"></div><div class="a" style="left:777px;top:838px;width:597px;height:2px;background:#1e1e1e;"></div>
</body></html>
